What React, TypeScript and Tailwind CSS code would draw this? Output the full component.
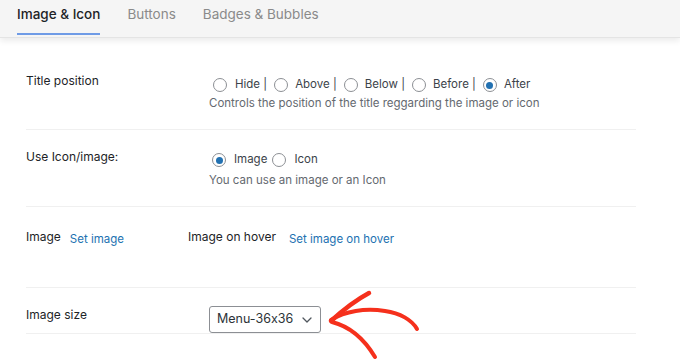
import React from "react";

function Radio({ checked }: { checked?: boolean }) {
  return (
    <span className="inline-flex h-[14px] w-[14px] shrink-0 items-center justify-center rounded-full border border-[#8c8f94] bg-white">
      {checked && <span className="h-[7px] w-[7px] rounded-full bg-[#2271b1]" />}
    </span>
  );
}

export default function App() {
  const font = { fontFamily: "Inter, 'Liberation Sans', sans-serif" };
  return (
    <div className="relative h-[362px] w-[680px] overflow-hidden bg-white text-[#1d2327] [font-feature-settings:'calt'_0]" style={font}>
      {/* Tabs header */}
      <div className="relative h-[38px] border-b border-[#e4e4e4] bg-[#f5f5f5] shadow-[0_3px_6px_rgba(0,0,0,0.08)]">
        <div className="flex h-full items-start gap-[27px] pl-[17px] pt-[5px] text-[13.5px]">
          <div className="flex flex-col">
            <span className="font-medium leading-[18px] text-[#1d2327]">Image &amp; Icon</span>
            <span className="mt-[10px] h-[2px] w-full bg-[#6f9be6]" />
          </div>
          <span className="leading-[18px] text-[#8a8a8a]">Buttons</span>
          <span className="leading-[18px] text-[#8a8a8a]">Badges &amp; Bubbles</span>
        </div>
      </div>

      <div className="ml-[26px] w-[610px]">
        {/* Row 1 */}
        <div className="flex h-[92px] border-b border-[#f0f0f0]">
          <div className="w-[183px] pt-[33px] text-[12px] leading-[20px]">Title position</div>
          <div className="flex flex-col pt-[37px]">
            <div className="flex h-[20px] items-center pl-[4px] text-[11.5px] text-[#3c434a]">
              <Radio />
              <span className="ml-[8px] mr-[7px]">Hide |</span>
              <Radio />
              <span className="ml-[7px] mr-[7px]">Above |</span>
              <Radio />
              <span className="ml-[7px] mr-[7px]">Below |</span>
              <Radio />
              <span className="ml-[7px] mr-[7px]">Before |</span>
              <Radio checked />
              <span className="ml-[7px]">After</span>
            </div>
            <div className="text-[11.5px] leading-[16px] text-[#646970]">
              Controls the position of the title reggarding the image or icon
            </div>
          </div>
        </div>

        {/* Row 2 */}
        <div className="flex h-[77px] border-b border-[#f0f0f0]">
          <div className="w-[183px] pt-[17px] text-[12px] leading-[20px]">Use Icon/image:</div>
          <div className="flex flex-col pt-[20px]">
            <div className="flex h-[20px] items-center pl-[3px] text-[11.5px] text-[#3c434a]">
              <Radio checked />
              <span className="ml-[8px] mr-[5px]">Image</span>
              <Radio />
              <span className="ml-[8px]">Icon</span>
            </div>
            <div className="pt-[2px] text-[11.5px] leading-[16px] text-[#646970]">
              You can use an image or an Icon
            </div>
          </div>
        </div>

        {/* Row 3 */}
        <div className="flex h-[81px] border-b border-[#f0f0f0] pt-[20px]">
          <div className="flex w-[162px] items-start">
            <span className="text-[12px] leading-[20px]">Image</span>
            <span className="ml-[9px] mt-[2px] text-[11.5px] leading-[20px] text-[#2271b1]">Set image</span>
          </div>
          <div className="flex items-start">
            <span className="text-[12px] leading-[20px]">Image on hover</span>
            <span className="ml-[13px] mt-[2px] text-[11.5px] leading-[20px] text-[#2271b1]">Set image on hover</span>
          </div>
        </div>

        {/* Row 4 */}
        <div className="flex h-[46px] border-b border-[#f0f0f0]">
          <div className="w-[183px] pt-[17px] text-[12px] leading-[20px]">Image size</div>
          <div className="pt-[18px]">
            <div className="flex h-[27px] w-[112px] items-center justify-between rounded-[3px] border border-[#8c8f94] bg-white pl-[7px] pr-[8px] text-[12.5px] text-[#2c3338]">
              <span>Menu-36x36</span>
              <svg width="10" height="6" viewBox="0 0 10 6" fill="none">
                <path d="M1 1l4 4 4-4" stroke="#50575e" strokeWidth="1.3" strokeLinecap="round" strokeLinejoin="round" />
              </svg>
            </div>
          </div>
        </div>
      </div>

      {/* Red hand-drawn arrow */}
      <svg className="pointer-events-none absolute left-0 top-0" width="680" height="362" viewBox="0 0 680 362">
        <g stroke="#f5301c" fill="none" strokeLinecap="round" strokeLinejoin="round">
          <path d="M331 320 C 345 311, 365 308, 385 311 C 400 313, 412 320, 417 329" strokeWidth="4" />
          <path d="M331 321 C 343 310, 356 300, 369 293" strokeWidth="4.5" />
          <path d="M332 322 C 348 326, 363 337, 375 357" strokeWidth="4" />
        </g>
      </svg>
    </div>
  );
}
